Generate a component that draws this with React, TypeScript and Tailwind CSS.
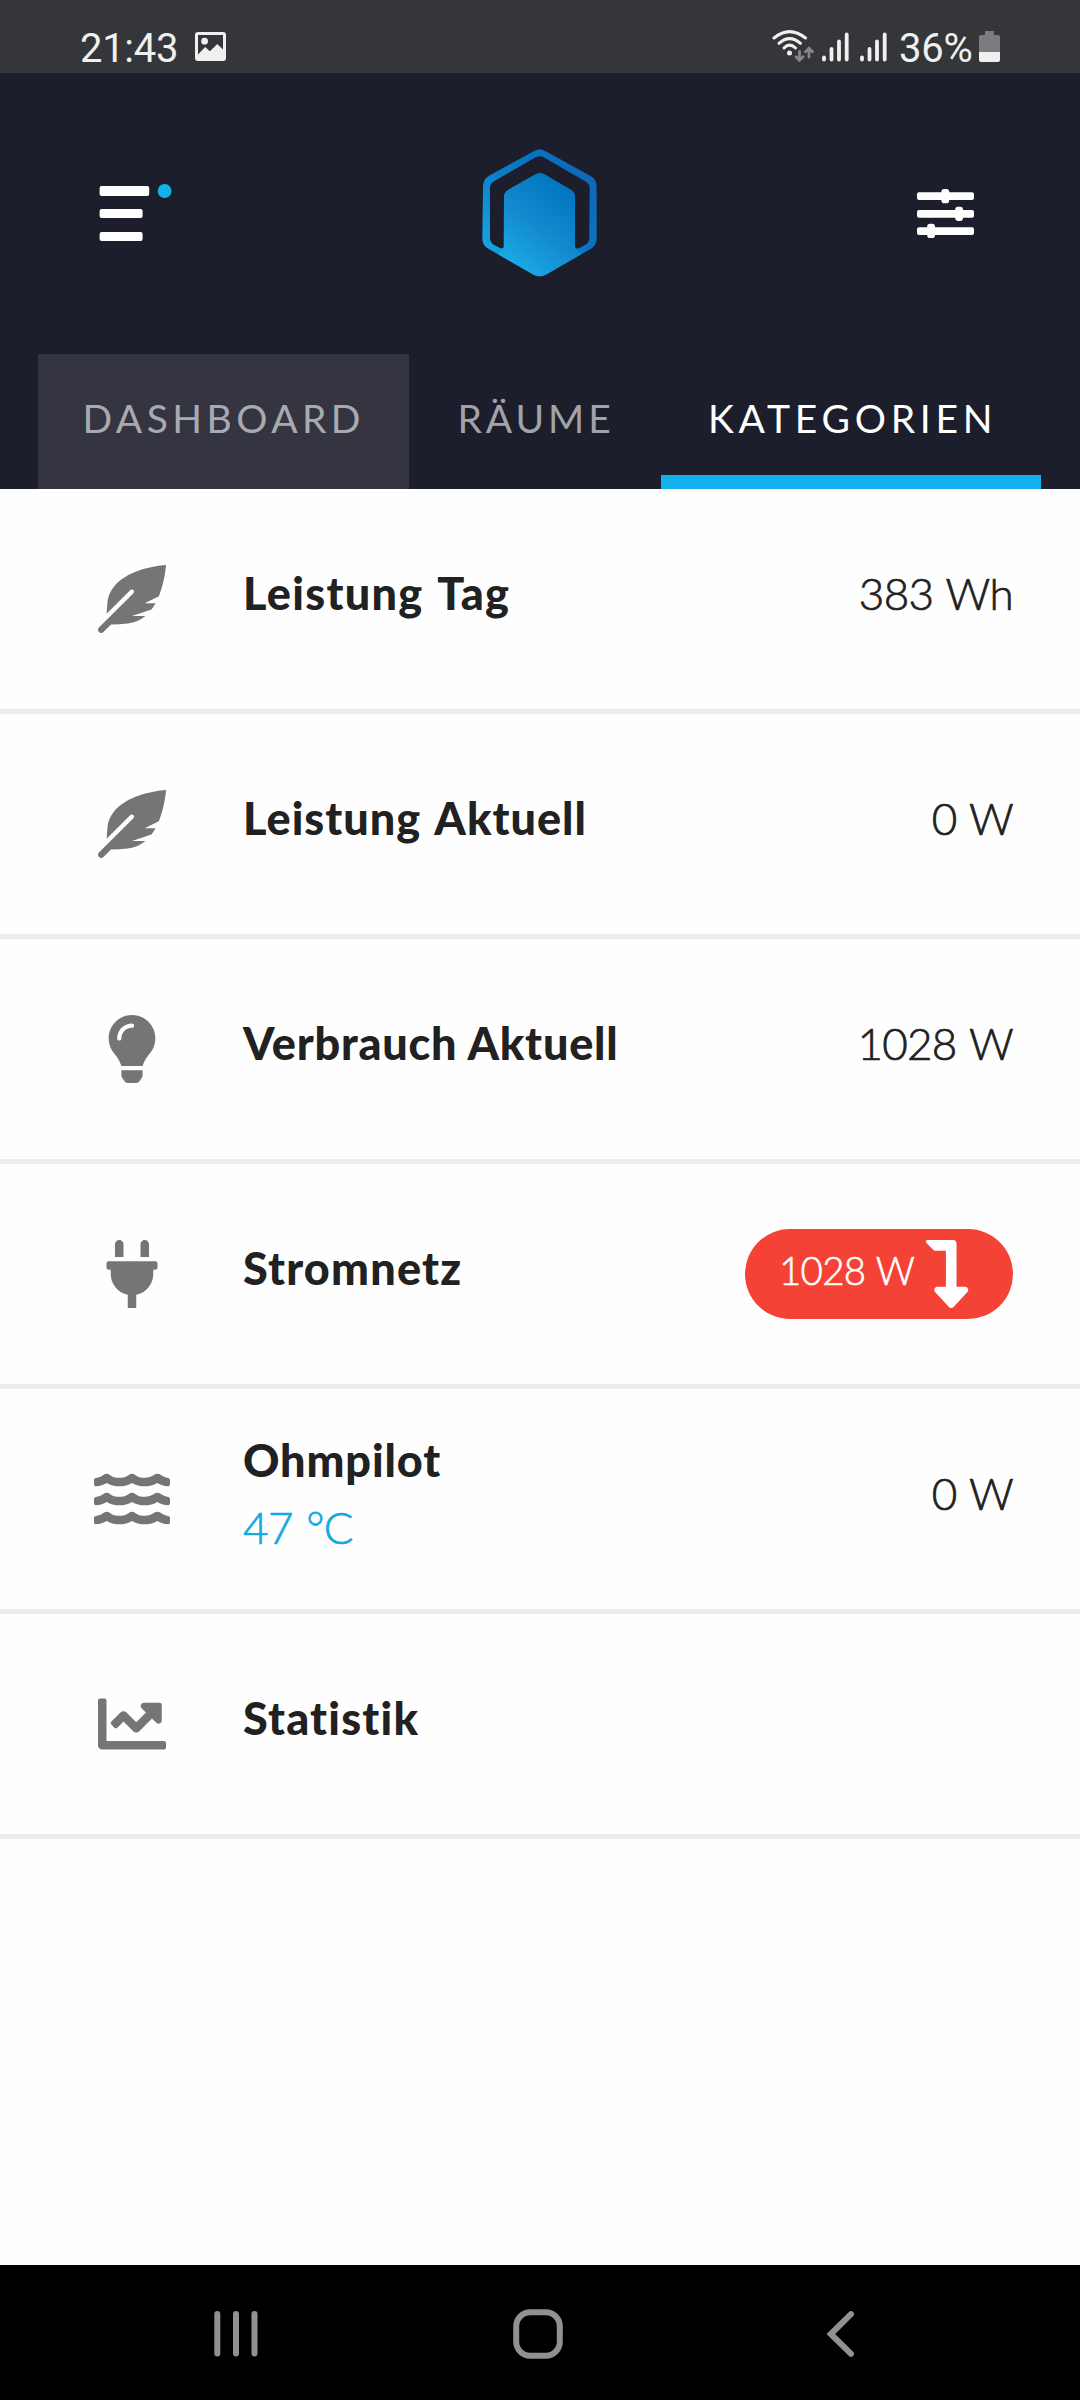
import React from "react";
import type { ReactNode } from "react";
import {
  FaChartLine,
  FaFeatherAlt,
  FaLevelDownAlt,
  FaLightbulb,
  FaPlug,
  FaWater,
} from "react-icons/fa";

function SignalBars() {
  return (
    <svg width="27" height="30" viewBox="0 0 27 30" stroke="#f0f0f1" strokeWidth="3.8" strokeLinecap="round">
      <path d="M2 25.5V27.5M9.5 17V27.5M17 9.5V27.5M24.7 2.5V27.5" />
    </svg>
  );
}

function StatusBar() {
  return (
    <div className="flex h-[73px] items-start justify-between bg-[#353639] pl-[80px] pr-[80px] text-[#f0f0f1]">
      <div className="flex items-start">
        <span className="mt-[29px] w-[115px] font-[Roboto] text-[40px] leading-[40px] tracking-[-0.3px]">
          21:43
        </span>
        <svg className="mt-[32px]" width="31" height="29" viewBox="0 0 31 29">
          <path
            fill="#f0f0f1"
            fillRule="evenodd"
            d="M3 0H28Q31 0 31 3V26Q31 29 28 29H3Q0 29 0 26V3Q0 0 3 0ZM3 3V22.5L10.2 15L14.8 19.2L22.3 12L28 17.5V3Z"
          />
          <circle cx="9.6" cy="9.2" r="3.4" fill="#f0f0f1" />
        </svg>
      </div>
      <div className="flex items-start">
        <svg className="mt-[30px]" width="42" height="32" viewBox="0 0 42 32" fill="none" strokeLinecap="round">
          <g stroke="#f0f0f1" strokeWidth="3">
            <path d="M2 8Q17.5 -4.8 33.5 8" />
            <path d="M7 13.3Q17.5 3.9 28.5 13.3" />
            <path d="M12 18Q17.5 12.3 23.5 18" />
          </g>
          <circle cx="17.5" cy="23" r="2.5" fill="#f0f0f1" />
          <g stroke="#85868a" strokeWidth="2.8">
            <path d="M27.5 21.5V29.5M24 26.8L27.5 30.3L31 26.8" />
            <path d="M37 27.2V19M33.5 21.8L37 18.2L40.5 21.8" />
          </g>
        </svg>
        <div className="ml-[8px] mt-[32px] flex gap-[11px]">
          <SignalBars />
          <SignalBars />
        </div>
        <span className="ml-[12px] mt-[29px] w-[80px] font-[Roboto] text-[40px] leading-[40px] tracking-[-0.2px]">
          36%
        </span>
        <svg className="mt-[31px]" width="21" height="31" viewBox="0 0 21 31">
          <path fill="#7b7c7f" d="M6 0H15V4H19Q21 4 21 6V21H0V6Q0 4 2 4H6Z" />
          <path fill="#f0f0f1" d="M0 21H21V29Q21 31 19 31H2Q0 31 0 29Z" />
        </svg>
      </div>
    </div>
  );
}

function Logo() {
  return (
    <svg width="115" height="128" viewBox="66 56 345 384">
      <defs>
        <linearGradient id="ring" x1="0" y1="1" x2="1" y2="0.15">
          <stop offset="0" stopColor="#1ab0e8" />
          <stop offset="0.5" stopColor="#0a7cc6" />
          <stop offset="0.8" stopColor="#0a6fbd" />
          <stop offset="1" stopColor="#1462b4" />
        </linearGradient>
        <linearGradient id="core" gradientUnits="userSpaceOnUse" x1="150" y1="400" x2="320" y2="180">
          <stop offset="0" stopColor="#1aaae3" />
          <stop offset="0.5" stopColor="#1389cf" />
          <stop offset="1" stopColor="#0077c0" />
        </linearGradient>
      </defs>
      <path
        fill="url(#ring)"
        fillRule="evenodd"
        d="M224 61Q239 52 254 61L392 137Q410 147 410 168V325Q409 345 393 355L257 433Q239 443 221 433L85 355Q68 346 67 325L69 168Q69 147 87 136ZM131 350Q127 357 119 352L101 343Q90 336 90 322V172Q90 160 100 154L227 81Q239 74 251 81L378 154Q389 160 389 172L388 322Q388 336 378 342L360 352Q345 358 345 348V200Q345 186 333 179L253 132Q239 125 227 132L145 178Q132 186 132 200Z"
      />
      <path
        fill="url(#core)"
        d="M132 354V200Q132 186 145 178L227 132Q239 125 253 132L333 179Q345 186 345 200V354L364 372L257 433Q239 443 221 433L114 372Z"
      />
    </svg>
  );
}

function Header() {
  return (
    <header className="bg-[#1c1e2b]">
      <div className="flex h-[281px] items-center justify-between pl-[99px] pr-[106px]">
        <svg className="overflow-visible" width="63" height="55" viewBox="-1 0 63 55">
          <g fill="#fff">
            <rect x="-0.4" y="0" width="49.6" height="10" rx="2" />
            <rect x="-0.4" y="23" width="43" height="9" rx="2" />
            <rect x="-0.4" y="46" width="43" height="9" rx="2" />
          </g>
          <circle cx="64.6" cy="5" r="6.9" fill="#13b1ec" />
        </svg>
        <div className="pb-[2px] pl-[10px]">
          <Logo />
        </div>
        <svg width="67" height="49" viewBox="-10 0 67 49" fill="#fff">
          <rect x="0" y="3.2" width="57" height="7.8" rx="2" />
          <rect x="24.4" y="0" width="7.8" height="14.2" rx="2.8" />
          <rect x="0" y="21" width="57" height="7.8" rx="2" />
          <rect x="38.2" y="17.7" width="7.8" height="14.2" rx="2.8" />
          <rect x="0" y="38.2" width="57" height="7.8" rx="2" />
          <rect x="10.2" y="34.8" width="7.8" height="14.2" rx="2.8" />
        </svg>
      </div>
      <nav className="flex h-[135px] pl-[38px] font-[Lato] text-[39px] leading-[40px]">
        <div className="flex w-[371px] items-center bg-[#343541] pb-[8px] pl-[44.5px] tracking-[4.45px] text-[#a9aab0]">
          DASHBOARD
        </div>
        <div className="flex w-[252px] items-center pb-[8px] pl-[48.5px] tracking-[3.9px] text-[#a2a3a8]">
          RÄUME
        </div>
        <div className="flex w-[380px] items-center border-b-[14px] border-[#13b1ec] pl-[47px] pt-[6px] tracking-[4.75px] text-white">
          KATEGORIEN
        </div>
      </nav>
    </header>
  );
}

function Value({ children }: { children: ReactNode }) {
  return (
    <span className="pb-[12px] text-[44px] font-light leading-[54px] tracking-[-0.7px] [word-spacing:2px] [-webkit-text-stroke:0.7px_currentColor]">
      {children}
    </span>
  );
}

function Row({ icon, title, value }: { icon: ReactNode; title: ReactNode; value?: ReactNode }) {
  return (
    <li className="flex h-[225px] items-center border-b-[5px] border-[#ededed] pr-[67px]">
      <div className="flex w-[243px] justify-center pl-[21px] text-[68px] text-[#757575]">
        <div className="mr-[0px] flex w-[222px] justify-start pl-[77px]">
          <div className="flex w-[68px] justify-center">{icon}</div>
        </div>
      </div>
      <div className="flex-1 font-black">{title}</div>
      {value}
    </li>
  );
}

export default function App() {
  return (
    <div className="flex h-[2400px] w-[1080px] flex-col overflow-hidden bg-white">
      <StatusBar />
      <Header />
      <ul className="flex-1 bg-[#fefefe] font-[Lato] text-[45px] leading-[54px] text-[#212121]">
        <Row
          icon={<FaFeatherAlt />}
          title={<div className="pb-[12px] tracking-[1.3px] [word-spacing:3px]">Leistung Tag</div>}
          value={<Value>383 Wh</Value>}
        />
        <Row
          icon={<FaFeatherAlt />}
          title={<div className="pb-[12px] tracking-[1px] [word-spacing:3px]">Leistung Aktuell</div>}
          value={<Value>0 W</Value>}
        />
        <Row
          icon={<FaLightbulb />}
          title={<div className="pb-[12px] tracking-[0.8px]">Verbrauch Aktuell</div>}
          value={<Value>1028 W</Value>}
        />
        <Row
          icon={<FaPlug />}
          title={<div className="pb-[12px] tracking-[1.2px]">Stromnetz</div>}
          value={
            <div className="flex h-[90px] w-[268px] items-center rounded-full bg-[#f44336] pl-[34px] text-white">
              <span className="w-[136px] whitespace-nowrap pb-[8px] text-[38.5px] font-light leading-[46px] tracking-[-0.75px] [word-spacing:1.5px] [-webkit-text-stroke:0.6px_currentColor]">
                1028 W
              </span>
              <FaLevelDownAlt className="-ml-[2px] text-[68px]" />
            </div>
          }
        />
        <Row
          icon={<FaWater className="h-[68px] w-[76px] shrink-0" />}
          title={
            <div className="pb-[10px] leading-[67px]">
              <div className="tracking-[0.9px]">Ohmpilot</div>
              <div className="text-[44px] font-light tracking-[-0.6px] text-[#13a8e0] [word-spacing:2px] [-webkit-text-stroke:0.7px_currentColor]">
                47 °C
              </div>
            </div>
          }
          value={<Value>0 W</Value>}
        />
        <Row icon={<FaChartLine />} title={<div className="pb-[12px] tracking-[1.2px]">Statistik</div>} />
      </ul>
      <footer className="flex h-[135px] items-center justify-between bg-black pl-[213px] pr-[225px] pt-[3px]">
        <svg width="45" height="48" viewBox="0 0 45 48" stroke="#919191" strokeWidth="6" strokeLinecap="round">
          <path d="M4.3 4V43.5M23 4V43.5M41.5 4V43.5" />
        </svg>
        <svg className="mr-[8px]" width="50" height="50" viewBox="0 0 50 50" fill="none" stroke="#919191" strokeWidth="6">
          <rect x="3.2" y="3.2" width="43.6" height="43.6" rx="14" />
        </svg>
        <svg
          width="29"
          height="48"
          viewBox="0 0 29 48"
          fill="none"
          stroke="#919191"
          strokeWidth="6"
          strokeLinecap="round"
        >
          <path d="M25 4.2L4.8 24L25 43.8" />
        </svg>
      </footer>
    </div>
  );
}
